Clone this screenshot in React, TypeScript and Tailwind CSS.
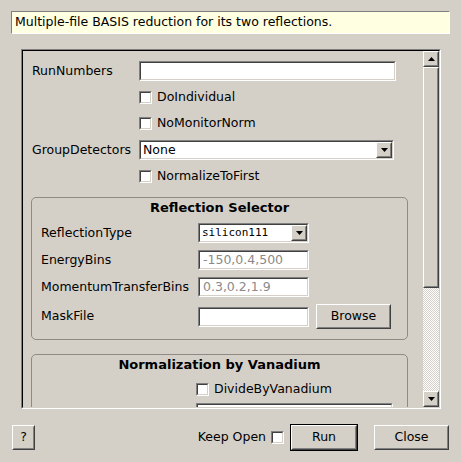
import React from 'react'

type P = { className?: string; children?: React.ReactNode }

const Sunken = ({ className = '', children }: P) => (
  <div className={`border border-t-[#808080] border-l-[#808080] border-r-white border-b-white ${className}`}>
    <div className="flex h-full w-full items-center border border-t-[#404040] border-l-[#404040] border-r-[#d4d0c8] border-b-[#d4d0c8] bg-white">
      {children}
    </div>
  </div>
)

const Raised = ({ className = '', children }: P) => (
  <div className={`border border-t-white border-l-white border-r-[#404040] border-b-[#404040] ${className}`}>
    <div className="flex h-full w-full items-center justify-center border border-t-[#d4d0c8] border-l-[#d4d0c8] border-r-[#808080] border-b-[#808080] bg-[#d4d0c8]">
      {children}
    </div>
  </div>
)

const Down = () => (
  <svg width="7" height="4" viewBox="0 0 7 4">
    <polygon points="0,0 7,0 3.5,4" fill="#000" />
  </svg>
)

const Up = () => (
  <svg width="7" height="4" viewBox="0 0 7 4">
    <polygon points="0,4 7,4 3.5,0" fill="#000" />
  </svg>
)

const Check = ({ className = '' }: P) => <Sunken className={`h-[13px] w-[13px] shrink-0 ${className}`} />

const CheckRow = ({ text, className = '' }: { text: string; className?: string }) => (
  <div className={`flex h-[20px] items-center ${className}`}>
    <Check />
    <span className="ml-[5px]">{text}</span>
  </div>
)

const Select = ({ value, className = '', mono = false }: { value: string; className?: string; mono?: boolean }) => (
  <Sunken className={className}>
    <span className={`flex-1 pl-[2px] ${mono ? "font-['DejaVu_Sans_Mono',monospace] text-[11px]" : ''}`}>{value}</span>
    <Raised className="h-[16px] w-[16px]">
      <Down />
    </Raised>
  </Sunken>
)

const App = () => {
  return (
    <div className="h-[462px] w-[461px] bg-[#d4d0c8] px-[11px] pt-[11px] font-['DejaVu_Sans',sans-serif] text-[12.5px] text-black">
      <div className="flex h-[23px] w-[439px] items-center border border-t-[#808080] border-l-[#808080] border-r-white border-b-white bg-[#ffffe1] pl-[3px]">
        Multiple-file BASIS reduction for its two reflections.
      </div>

      <div className="ml-[10px] mt-[15px] h-[360px] w-[420px] border border-t-[#808080] border-l-[#808080] border-r-white border-b-white">
        <div className="flex h-full w-full border border-t-black border-l-black border-r-[#d4d0c8] border-b-[#d4d0c8]">
          <div className="flex h-[356px] w-[400px] flex-col overflow-hidden">
            <div className="mt-[10px] flex h-[20px] shrink-0 items-center pl-[9px]">
              <span className="w-[107px]">RunNumbers</span>
              <Sunken className="h-[20px] w-[257px]" />
            </div>
            <CheckRow text="DoIndividual" className="mt-[6px] shrink-0 pl-[116px]" />
            <CheckRow text="NoMonitorNorm" className="mt-[6px] shrink-0 pl-[116px]" />
            <div className="mt-[7px] flex h-[20px] shrink-0 items-center pl-[9px]">
              <span className="w-[107px]">GroupDetectors</span>
              <Select value="None" className="h-[20px] w-[255px]" />
            </div>
            <CheckRow text="NormalizeToFirst" className="mt-[6px] shrink-0 pl-[116px]" />

            <div className="ml-[8px] mt-[11px] w-[377px] shrink-0 rounded-[5px] border border-[#8f8b84] pb-[10px]">
              <div className="mt-[1px] flex h-[18px] items-center justify-center text-[13px] font-bold">
                Reflection Selector
              </div>
              <div className="mt-[6px] flex h-[20px] items-center pl-[9px]">
                <span className="w-[157px]">ReflectionType</span>
                <Select value="silicon111" mono className="h-[20px] w-[111px]" />
              </div>
              <div className="mt-[7px] flex h-[20px] items-center pl-[9px]">
                <span className="w-[157px]">EnergyBins</span>
                <Sunken className="h-[20px] w-[111px]">
                  <span className="pl-[3px] text-[#8a8a8a]">-150,0.4,500</span>
                </Sunken>
              </div>
              <div className="mt-[7px] flex h-[20px] items-center pl-[9px]">
                <span className="w-[157px]">MomentumTransferBins</span>
                <Sunken className="h-[20px] w-[111px]">
                  <span className="pl-[3px] text-[#8a8a8a]">0.3,0.2,1.9</span>
                </Sunken>
              </div>
              <div className="mt-[7px] flex h-[25px] items-center pl-[9px]">
                <span className="w-[157px]">MaskFile</span>
                <Sunken className="h-[20px] w-[111px]" />
                <Raised className="ml-[7px] h-[25px] w-[75px]">Browse</Raised>
              </div>
            </div>

            <div className="ml-[8px] mt-[14px] w-[377px] shrink-0 rounded-[5px] border border-[#8f8b84] pb-[10px]">
              <div className="mt-[1px] flex h-[18px] items-center justify-center text-[13px] font-bold">
                Normalization by Vanadium
              </div>
              <CheckRow text="DivideByVanadium" className="mt-[5px] pl-[164px]" />
              <div className="mt-[4px] flex h-[20px] items-center pl-[164px]">
                <Sunken className="h-[20px] w-[197px]" />
              </div>
            </div>
          </div>

          <div className="flex h-[356px] w-[16px] flex-col">
            <Raised className="h-[16px] w-[16px] shrink-0">
              <Up />
            </Raised>
            <Raised className="h-[221px] w-[16px] shrink-0" />
            <div className="flex-1 bg-[repeating-conic-gradient(#d4d0c8_0%_25%,#ffffff_0%_50%)] bg-size-[2px_2px]" />
            <Raised className="h-[16px] w-[16px] shrink-0">
              <Down />
            </Raised>
          </div>
        </div>
      </div>

      <div className="mt-[15px] flex h-[27px] items-center">
        <Raised className="ml-[1px] h-[25px] w-[23px]">?</Raised>
        <div className="ml-auto mr-[1px] flex items-center">
          <span>Keep Open</span>
          <Check className="ml-[5px]" />
          <div className="ml-[6px] h-[27px] w-[68px] border border-black">
            <Raised className="h-full w-full">Run</Raised>
          </div>
          <Raised className="ml-[16px] h-[25px] w-[75px]">Close</Raised>
        </div>
      </div>
    </div>
  )
}

export default App
